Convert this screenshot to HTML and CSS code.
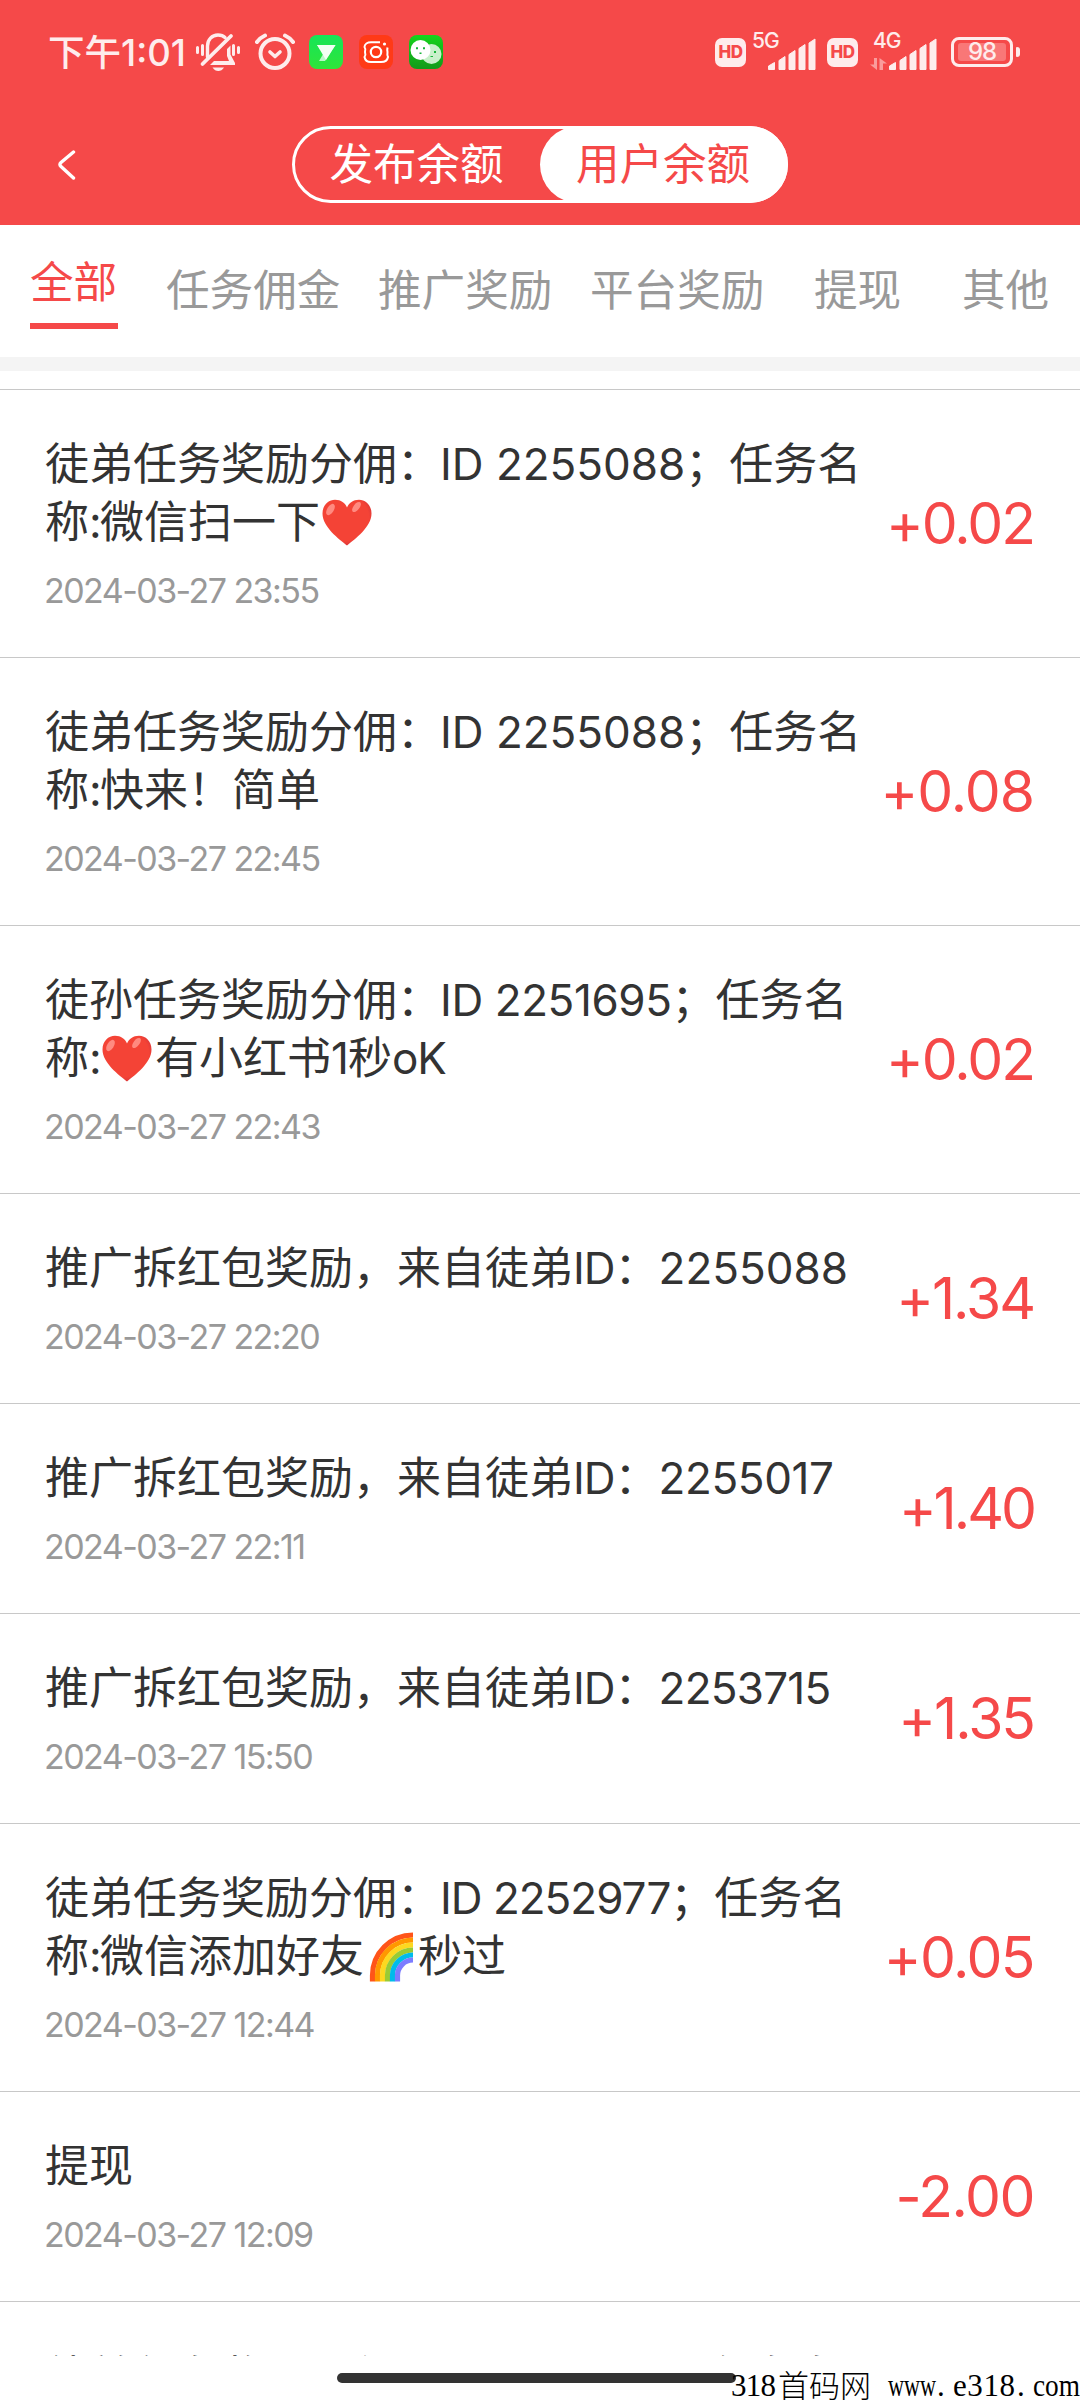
FILE: index.html
```html
<!DOCTYPE html>
<html lang="zh-CN">
<head>
<meta charset="utf-8">
<title>用户余额</title>
<link rel="stylesheet" href="styles.css">
</head>
<body>
<svg width="0" height="0" class="defs" aria-hidden="true">
  <defs>
    <radialGradient id="heartFill" cx="45%" cy="40%" r="62%">
      <stop offset="0.8" stop-color="#f44336"/>
      <stop offset="1" stop-color="#d8363a"/>
    </radialGradient>
    <linearGradient id="greenA" x1="0" y1="0" x2="0" y2="1">
      <stop offset="0" stop-color="#16e558"/><stop offset="1" stop-color="#2fe53a"/>
    </linearGradient>
    <linearGradient id="greenB" x1="0" y1="0" x2="0" y2="1">
      <stop offset="0" stop-color="#16d41c"/><stop offset="1" stop-color="#129a1a"/>
    </linearGradient>
    <symbol id="heart" viewBox="0 0 50 47">
      <path d="M25 46.500C17 40 .500 28 .500 14.500C.500 6 6.500 .800 13 .800C19 .800 23 4 25 8.500C27 4 31 .800 37 .800C43.500 .800 49.500 6 49.500 14.500C49.500 28 33 40 25 46.500Z" fill="url(#heartFill)"/>
      <ellipse cx="8.500" cy="10.500" rx="3.300" ry="6.300" transform="rotate(32 8.500 10.500)" fill="#ff8a80"/>
      <ellipse cx="34.500" cy="8" rx="3" ry="6" transform="rotate(38 34.500 8)" fill="#ff8a80"/>
    </symbol>
    <symbol id="signal" viewBox="0 0 48 32">
      <path d="M.500 31.500V28L6.500 24.500V31.500ZM11 31.500V22.500L17 18.500V31.500ZM21 31.500V16.500L27 12.500V31.500ZM31 31.500V10.500L37 6.500V31.500ZM41 31.500V5L47 1V31.500Z" stroke="#feecec" stroke-width="1" stroke-linejoin="round"/>
    </symbol>
  </defs>
</svg>
<div class="screen">
  <header class="header">
    <div class="status">
      <span class="clock">下午1:01</span>
      <svg class="ic-bell" viewBox="0 0 44 38" fill="none" stroke="#feecec" stroke-linecap="round">
        <path d="M11.500 24V13C11.500 6.500 16 2 22 2C25 2 27.500 3 29 4.500" stroke-width="3.400"/>
        <path d="M6.500 31L35 3" stroke-width="3.800"/>
        <path d="M31 16L34.500 12.500V21.500L39 30V32H14L18 28H33L31 23Z" fill="#feecec" stroke="none"/>
        <path d="M16.500 34.500H28C26.500 37 24.500 38 22.300 38S18 37 16.500 34.500Z" fill="#feecec" stroke="none"/>
        <path d="M1.500 14.500V19.500M6.500 12.500V21.500M37.500 12.500V21.500M42.500 14.500V19.500" stroke-width="3"/>
      </svg>
      <svg class="ic-alarm" viewBox="0 0 40 38" fill="none" stroke="#feecec" stroke-linecap="round">
        <circle cx="20" cy="20.500" r="14.500" stroke-width="4"/>
        <path d="M15 19L20 23.500L25 19" stroke-width="3.600" stroke-linejoin="round"/>
        <path d="M2 9C4 6.500 6.500 4 10 2.500M38 9C36 6.500 33.500 4 30 2.500" stroke-width="4"/>
      </svg>
      <svg class="ic-app a1" viewBox="0 0 34 34">
        <rect width="34" height="34" rx="8" fill="url(#greenA)"/>
        <path d="M8 10H26.500L16 26H10L14.500 18.500Z" fill="#baf7c8"/>
        <path d="M8 10H26.500L17 25Z" fill="#f2fff4"/>
      </svg>
      <svg class="ic-app" viewBox="0 0 34 34" fill="none" stroke="#fff">
        <rect width="34" height="34" rx="8" fill="#ff3a17" stroke="none"/>
        <path d="M21 7.200H12C8.500 7.200 5.500 9 5.500 12Q7 14 6 17Q7 20 5.500 22C6 25 8.500 27 12 27H22C26 27 28.500 25 29 22Q28 20 28.500 17Q28 15 28.500 12.500" stroke-width="2"/>
        <circle cx="17" cy="17" r="5.200" stroke-width="2.200"/>
        <circle cx="25.500" cy="9" r="1.600" fill="#fff" stroke="none"/>
      </svg>
      <svg class="ic-app" viewBox="0 0 34 34">
        <rect width="34" height="34" rx="8" fill="url(#greenB)"/>
        <circle cx="22.500" cy="19" r="10" fill="#c9f0cb"/>
        <circle cx="11.500" cy="15" r="10" fill="#fff"/>
        <path d="M7 12.200h2v2h-2zM14 12.200h2v2h-2zM10.500 17.500h2v1.500h-2zM25 16h2v2h-2zM21.500 21h2.500v1h-2.500z" fill="#18b53a"/>
      </svg>
      <span class="hd">HD</span>
      <span class="net"><b>5G</b><svg class="sig" viewBox="0 0 48 32"><use href="#signal"/></svg></span>
      <span class="hd hd2">HD</span>
      <span class="net net2"><b>4G</b><svg class="updown" viewBox="0 0 17 12"><path d="M4 0H7V12L0 6.500H4ZM9.500 12V0L17 5.500H13V12Z" fill="#fa9c9c"/></svg><svg class="sig" viewBox="0 0 48 32"><use href="#signal"/></svg></span>
      <span class="battery"><i>98</i></span>
      <span class="tip"></span>
    </div>
    <nav class="topbar">
      <svg class="back" viewBox="0 0 18 30" fill="none" stroke="#fff" stroke-width="3.400" stroke-linecap="round"><path d="M15.500 2L3 12.500Q.800 14.500 3 16.500L15.500 28"/></svg>
      <div class="switch"><span class="opt">发布余额</span><span class="opt on">用户余额</span></div>
    </nav>
  </header>
  <nav class="tabs">
    <span class="tab on">全部</span><span class="tab">任务佣金</span><span class="tab">推广奖励</span><span class="tab">平台奖励</span><span class="tab">提现</span><span class="tab">其他</span>
  </nav>
  <main class="list">
    <article class="row"><div class="info"><p class="title">徒弟任务奖励分佣：<span class="n">ID 2255088</span>；任务名<br>称<span class="c">:</span>微信扫一下<svg class="heart"><use href="#heart"/></svg></p><time>2024-03-27 23:55</time></div><strong>+0.02</strong></article>
    <article class="row"><div class="info"><p class="title">徒弟任务奖励分佣：<span class="n">ID 2255088</span>；任务名<br>称<span class="c">:</span>快来！简单</p><time>2024-03-27 22:45</time></div><strong class="wide">+0.08</strong></article>
    <article class="row"><div class="info"><p class="title">徒孙任务奖励分佣：<span class="n s1">ID 2251695</span>；任务名<br>称<span class="c">:</span><svg class="heart"><use href="#heart"/></svg>有小红书<span class="s3">1</span>秒<span class="s3">oK</span></p><time>2024-03-27 22:43</time></div><strong>+0.02</strong></article>
    <article class="row"><div class="info"><p class="title">推广拆红包奖励，来自徒弟<span class="id">ID</span>：<span>2255088</span></p><time>2024-03-27 22:20</time></div><strong>+1.34</strong></article>
    <article class="row"><div class="info"><p class="title">推广拆红包奖励，来自徒弟<span class="id">ID</span>：<span class="s1">2255017</span></p><time>2024-03-27 22:11</time></div><strong class="tight">+1.40</strong></article>
    <article class="row"><div class="info"><p class="title">推广拆红包奖励，来自徒弟<span class="id">ID</span>：<span class="s2">2253715</span></p><time>2024-03-27 15:50</time></div><strong>+1.35</strong></article>
    <article class="row"><div class="info"><p class="title">徒弟任务奖励分佣：<span class="n s3">ID 2252977</span>；任务名<br>称<span class="c">:</span>微信添加好友<svg class="rainbow" viewBox="0 0 54 50" fill="none" stroke-width="5.200"><path d="M6.500 49.500V43.500A40.500 40.500 0 0 1 47 3" stroke="#ff5419"/><path d="M11.500 49.500V43.500A35.500 35.500 0 0 1 47 8" stroke="#ff9800"/><path d="M16.500 49.500V43.500A30.500 30.500 0 0 1 47 13" stroke="#fdd820"/><path d="M21.500 49.500V43.500A25.500 25.500 0 0 1 47 18" stroke="#9acb34"/><path d="M26.500 49.500V43.500A20.500 20.500 0 0 1 47 23" stroke="#00bbea"/><path d="M31.500 49.500V43.500A15.500 15.500 0 0 1 47 28" stroke="#7c7cff"/></svg>秒过</p><time>2024-03-27 12:44</time></div><strong class="mid">+0.05</strong></article>
    <article class="row"><div class="info"><p class="title">提现</p><time>2024-03-27 12:09</time></div><strong class="mid">-2.00</strong></article>
    <article class="row last"><div class="info"><p class="title">徒弟任务奖励分佣：<span class="n s3">ID 2251695</span>；任务名</p></div></article>
  </main>
  <footer class="gesture"><span class="bar"></span>
    <svg class="mark" viewBox="0 0 350 34" fill="#000">
      <text x="0" y="26" textLength="45">318</text>
      <text x="47" y="27" class="cjk" textLength="93">首码网</text>
      <text x="157" y="26" textLength="48" lengthAdjust="spacingAndGlyphs">www</text>
      <text x="206" y="26">.</text>
      <text x="222" y="26" textLength="62">e318</text>
      <text x="286" y="26">.</text>
      <text x="302" y="26" textLength="47" lengthAdjust="spacingAndGlyphs">com</text>
    </svg>
  </footer>
</div>
</body>
</html>
```
FILE: styles.css
```css
* { box-sizing: border-box; margin: 0; padding: 0; }
body {
  width: 1080px;
  background: #fff;
  font-family: Inter, "Noto Sans CJK SC", sans-serif;
  color: #333;
}
.defs { position: absolute; }
.screen { height: 2400px; display: flex; flex-direction: column; overflow: hidden; }
svg { flex: none; display: block; }

.header { height: 225px; background: #f54949; color: #fff; flex: none; }
.status { height: 104px; padding-left: 48px; display: flex; align-items: center; color: #feecec; }
.clock { width: 148px; padding-bottom: 3px; font-size: 36.5px; font-weight: 500; white-space: nowrap; }
.ic-bell { width: 44px; height: 38px; margin-right: 15px; }
.ic-alarm { width: 40px; height: 38px; }
.ic-app { width: 34px; height: 34px; margin-left: 16px; }
.a1 { margin-left: 14px; }
.hd {
  width: 31px; height: 29px; margin-left: 272px; border-radius: 7px; background: #feecec;
  color: #f54949; font-size: 17px; font-weight: 800; line-height: 29px; text-align: center; letter-spacing: -0.5px;
}
.hd2 { margin-left: 11px; }
.net { position: relative; width: 64px; height: 36px; margin-left: 6px; display: flex; align-items: flex-end; justify-content: flex-end; }
.net b { position: absolute; left: 0; top: -7px; font-size: 21px; font-weight: 500; line-height: 28px; letter-spacing: -1px; }
.net2 { width: 67px; margin-left: 12px; }
.net2 b { left: 3px; }
.updown { width: 17px; height: 12px; margin-right: 2px; }
.sig { width: 48px; height: 32px; fill: #feecec; }
.battery {
  width: 62px; height: 30px; margin-left: 14px; padding: 3px 4px; border: 3px solid #feecec; border-radius: 8px;
}
.battery i {
  display: block; height: 18px; border-radius: 3px; background: #f97777; font-style: normal;
  font-size: 24px; font-weight: 500; line-height: 18px; text-align: center; letter-spacing: -1px;
}
.tip { width: 4px; height: 10px; margin-left: 3px; border-radius: 1px 3px 3px 1px; background: #feecec; }

.topbar { height: 121px; padding: 22px 0 0 58px; display: flex; align-items: flex-start; }
.back { width: 18px; height: 30px; margin-top: 24px; }
.switch {
  width: 496px; height: 77px; margin-left: 216px; border: 3px solid #fff; border-radius: 39px; display: flex;
}
.opt { width: 245px; padding-right: 2px; font-size: 43.5px; line-height: 71px; text-align: center; }
.opt.on { width: 248px; height: 77px; margin: -3px -3px -3px 0; line-height: 77px; border-radius: 39px; background: #fff; color: #f54949; }

.tabs {
  height: 146px; flex: none; padding: 30px 30px 0; border-bottom: 14px solid #f4f4f4;
  display: flex; align-items: flex-start; font-size: 43.6px; line-height: 62px; color: #999; white-space: nowrap;
}
.tab { width: 176px; padding-top: 5px; margin-left: 36px; }
.tab.on { width: 88px; height: 74px; padding: 0; margin: 0; border-bottom: 6px solid #f54949; color: #f54949; line-height: 55px; }
.tab:nth-child(2), .tab:nth-child(5) { margin-left: 48px; }
.tab:nth-child(5), .tab:nth-child(6) { width: 88px; }
.tab:nth-child(6) { margin-left: 60px; }

.list { height: 1985px; flex: none; padding-top: 18px; overflow: hidden; }
.row {
  padding: 45px 45px 44px; border-top: 1px solid #c8c8c8;
  display: flex; align-items: center; justify-content: space-between;
}
.title { font-size: 44px; line-height: 58px; white-space: nowrap; }
.title .n { margin-left: -1px; }
.title .c { display: inline-block; width: 11px; }
.title .id { letter-spacing: -1px; }
.title .s1 { letter-spacing: -0.4px; }
.title .s2 { letter-spacing: -0.75px; }
.title .s3 { letter-spacing: -1px; }
.row.last { padding-top: 46px; }
.heart { display: inline-block; width: 50px; height: 47px; margin: 0 3px 0 2px; vertical-align: -8px; }
.rainbow { display: inline-block; width: 54px; height: 50px; margin: -5px -2px -5px 2px; vertical-align: -5px; }
time { display: block; height: 46px; margin: 15px 0 1px -1px; font-size: 34px; line-height: 50px; color: #999; letter-spacing: -1.55px; }
.row strong { margin-right: 1px; font-size: 57px; line-height: 62px; font-weight: 400; color: #f54949; letter-spacing: -2px; }
.row .wide { letter-spacing: -1px; }
.row .mid { letter-spacing: -1.5px; }
.row .tight { letter-spacing: -3px; }

.gesture { flex: 1; position: relative; padding: 17px 0 0 337px; }
.bar { display: block; width: 399px; height: 10px; border-radius: 5px; background: #333; }
.mark { position: absolute; left: 731px; top: 14px; width: 350px; height: 34px; font: 31px "Liberation Serif", serif; overflow: visible; }
.cjk { font: 300 31px "Noto Sans CJK SC", sans-serif; }
```
